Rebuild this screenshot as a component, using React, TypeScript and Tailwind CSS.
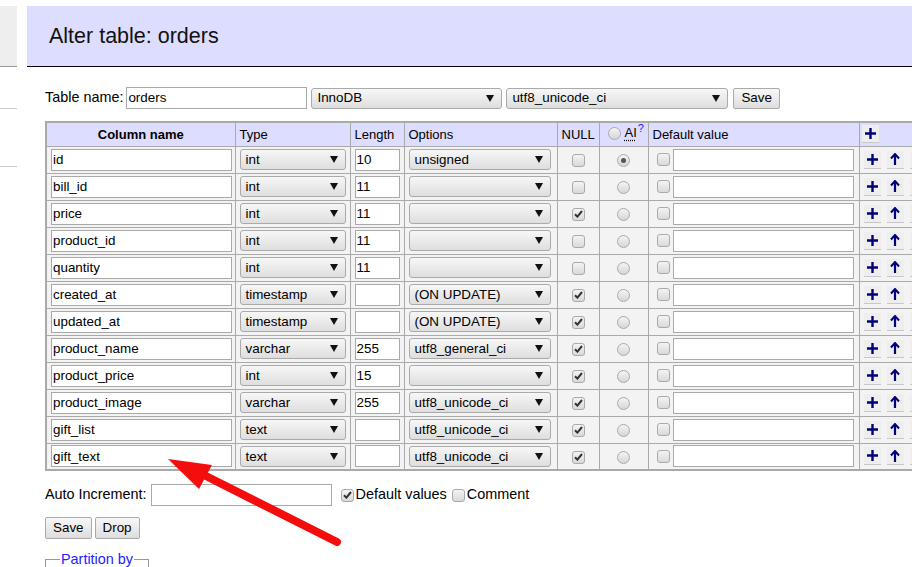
import React from "react";

type Row = {
  name: string;
  type: string;
  length: string;
  option: string;
  nullable: boolean;
  ai?: boolean;
};

const rows: Row[] = [
  { name: "id", type: "int", length: "10", option: "unsigned", nullable: false, ai: true },
  { name: "bill_id", type: "int", length: "11", option: "", nullable: false },
  { name: "price", type: "int", length: "11", option: "", nullable: true },
  { name: "product_id", type: "int", length: "11", option: "", nullable: false },
  { name: "quantity", type: "int", length: "11", option: "", nullable: false },
  { name: "created_at", type: "timestamp", length: "", option: "(ON UPDATE)", nullable: true },
  { name: "updated_at", type: "timestamp", length: "", option: "(ON UPDATE)", nullable: true },
  { name: "product_name", type: "varchar", length: "255", option: "utf8_general_ci", nullable: true },
  { name: "product_price", type: "int", length: "15", option: "", nullable: true },
  { name: "product_image", type: "varchar", length: "255", option: "utf8_unicode_ci", nullable: true },
  { name: "gift_list", type: "text", length: "", option: "utf8_unicode_ci", nullable: true },
  { name: "gift_text", type: "text", length: "", option: "utf8_unicode_ci", nullable: true },
];

function TextBox({ value, className }: { value: string; className: string }) {
  return (
    <div
      className={`h-[22px] bg-white border border-[#a9a9a9] px-[1px] flex items-center text-[13.4px] leading-none text-black ${className}`}
    >
      {value}
    </div>
  );
}

function Select({ value, className }: { value: string; className: string }) {
  return (
    <div
      className={`h-[21px] rounded-[3px] border border-[#aaa] bg-gradient-to-b from-[#f7f7f7] to-[#dedede] pl-[5px] pr-[7px] flex items-center justify-between text-[13.4px] leading-none text-black ${className}`}
    >
      <span>{value}</span>
      <svg width="8" height="7" viewBox="0 0 8 7">
        <polygon points="0,0 8,0 4,7" fill="#111" />
      </svg>
    </div>
  );
}

function Check({ checked }: { checked?: boolean }) {
  return (
    <span className="inline-flex w-[13px] h-[13px] rounded-[3px] border border-[#aaa] bg-gradient-to-b from-[#f4f4f4] to-[#d9d9d9] items-center justify-center">
      {checked && (
        <svg width="9" height="8" viewBox="0 0 9 8">
          <path d="M1 4.2 L3.4 6.6 L8 1" stroke="#333" strokeWidth="2" fill="none" />
        </svg>
      )}
    </span>
  );
}

function Radio({ checked }: { checked?: boolean }) {
  return (
    <span className="inline-flex w-[13px] h-[13px] rounded-full border border-[#aaa] bg-gradient-to-b from-[#f4f4f4] to-[#d6d6d6] items-center justify-center">
      {checked && <span className="w-[5px] h-[5px] rounded-full bg-[#555]" />}
    </span>
  );
}

function IconButton({ children }: { children: React.ReactNode }) {
  return (
    <span className="inline-flex w-[17px] h-[18px] bg-[#eee] border-b border-[#c8c8c8] items-center justify-center">
      {children}
    </span>
  );
}

const Plus = () => (
  <svg width="11" height="11" viewBox="0 0 11 11">
    <path d="M5.5 0 V11 M0 5.5 H11" stroke="#00007a" strokeWidth="2.4" />
  </svg>
);

const Up = () => (
  <svg width="10" height="12" viewBox="0 0 10 12">
    <path d="M5 12 V2" stroke="#00007a" strokeWidth="2.2" />
    <path d="M1 5.5 L5 1 L9 5.5" stroke="#00007a" strokeWidth="2" fill="none" />
  </svg>
);

const cell = "border border-[#aaa] px-[4px] py-0 h-[27px]";

export default function App() {
  return (
    <div
      className="relative w-[912px] h-[567px] overflow-hidden bg-white text-black"
      style={{ fontFamily: '"Liberation Sans", Arial, sans-serif' }}
    >
      <div className="flex gap-[10px] pt-[6px]">
        <div className="w-[17px] shrink-0 flex flex-col">
          <div className="h-[61px] bg-[#eee] border-b border-[#999]" />
          <div className="h-[42px] border-b border-[#ccc]" />
          <div className="h-[58px] border-b border-[#ccc]" />
        </div>

        <div className="flex-1 min-w-0">
          <div className="h-[61px] bg-[#ddf] border-b border-black flex items-center pl-[22px]">
            <h1 className="text-[21.5px] font-normal leading-none text-[#111] pt-[1px]">Alter table: orders</h1>
          </div>

          <div className="pl-[18px]">
            <div className="flex items-center mt-[20px] h-[22px] text-[14.4px]">
              <span className="mr-[3px]">Table name:</span>
              <TextBox value="orders" className="w-[181px]" />
              <Select value="InnoDB" className="w-[191px] ml-[4px]" />
              <Select value="utf8_unicode_ci" className="w-[222px] ml-[4px]" />
              <button className="ml-[5px] h-[21px] px-[7px] rounded-[2px] border border-[#aaa] bg-gradient-to-b from-[#f7f7f7] to-[#dedede] text-[13.4px] leading-none">
                Save
              </button>
            </div>

            <table className="mt-[12px] table-fixed border-collapse border-2 border-[#aaa] w-[900px] text-[13px]">
              <colgroup>
                <col className="w-[189px]" />
                <col className="w-[115px]" />
                <col className="w-[54px]" />
                <col className="w-[153px]" />
                <col className="w-[42px]" />
                <col className="w-[49px]" />
                <col className="w-[211px]" />
                <col className="w-[87px]" />
              </colgroup>
              <thead>
                <tr className="bg-[#ddf] h-[24px]">
                  <th className="border border-[#aaa] font-bold text-center px-[4px]">Column name</th>
                  <th className="border border-[#aaa] font-normal text-left px-[4px]">Type</th>
                  <th className="border border-[#aaa] font-normal text-left px-[4px]">Length</th>
                  <th className="border border-[#aaa] font-normal text-left px-[4px]">Options</th>
                  <th className="border border-[#aaa] font-normal text-left px-[4px]">NULL</th>
                  <th className="border border-[#aaa] font-normal text-left px-[8px]">
                    <span className="inline-flex items-center gap-[4px]">
                      <Radio />
                      <span className="underline decoration-dotted underline-offset-2">AI</span>
                      <sup className="text-[#22f] -ml-[3px] text-[11px]">?</sup>
                    </span>
                  </th>
                  <th className="border border-[#aaa] font-normal text-left px-[4px]">Default value</th>
                  <th className="border border-[#aaa] font-normal text-left px-[2px]">
                    <IconButton>
                      <Plus />
                    </IconButton>
                  </th>
                </tr>
              </thead>
              <tbody>
                {rows.map((r) => (
                  <tr key={r.name} className="bg-[#f3f3f3]">
                    <td className={cell}>
                      <TextBox value={r.name} className="w-[181px]" />
                    </td>
                    <td className={cell}>
                      <Select value={r.type} className="w-[106px]" />
                    </td>
                    <td className={cell}>
                      <TextBox value={r.length} className="w-[45px]" />
                    </td>
                    <td className={cell}>
                      <Select value={r.option} className="w-[142px]" />
                    </td>
                    <td className={`${cell} text-center`}>
                      <span className="inline-flex align-middle">
                        <Check checked={r.nullable} />
                      </span>
                    </td>
                    <td className={`${cell} text-center`}>
                      <span className="inline-flex align-middle">
                        <Radio checked={r.ai} />
                      </span>
                    </td>
                    <td className={cell}>
                      <div className="flex items-center gap-[3px] pl-[4px]">
                        <Check />
                        <TextBox value="" className="w-[181px]" />
                      </div>
                    </td>
                    <td className={`${cell} px-[2px]`}>
                      <div className="flex gap-[6px]">
                        <IconButton>
                          <Plus />
                        </IconButton>
                        <IconButton>
                          <Up />
                        </IconButton>
                        <IconButton>
                          <span />
                        </IconButton>
                      </div>
                    </td>
                  </tr>
                ))}
              </tbody>
            </table>

            <div className="flex items-center mt-[13px] h-[22px] text-[14.4px]">
              <span className="mr-[4px]">Auto Increment:</span>
              <TextBox value="" className="w-[181px]" />
              <span className="ml-[9px] mr-[2px] inline-flex">
                <Check checked />
              </span>
              <span>Default values</span>
              <span className="ml-[5px] mr-[2px] inline-flex">
                <Check />
              </span>
              <span>Comment</span>
            </div>

            <div className="flex gap-[3px] mt-[11px]">
              <button className="h-[22px] px-[7px] rounded-[2px] border border-[#aaa] bg-gradient-to-b from-[#f7f7f7] to-[#dedede] text-[13.4px] leading-none">
                Save
              </button>
              <button className="h-[22px] px-[7px] rounded-[2px] border border-[#aaa] bg-gradient-to-b from-[#f7f7f7] to-[#dedede] text-[13.4px] leading-none">
                Drop
              </button>
            </div>

            <fieldset className="mt-[11px] w-[102px] h-[40px] border border-[#999] border-b-0 px-[14px]">
              <legend className="px-[1px] whitespace-nowrap text-[14.4px] leading-[18px] text-[#22f]">
                Partition by
              </legend>
            </fieldset>
          </div>
        </div>
      </div>

      <svg className="absolute left-0 top-0 pointer-events-none" width="912" height="567">
        <line x1="337" y1="542" x2="200" y2="473" stroke="#f40d0d" strokeWidth="8" strokeLinecap="round" />
        <polygon points="168,459 212,465 199,489" fill="#f40d0d" />
      </svg>
    </div>
  );
}
